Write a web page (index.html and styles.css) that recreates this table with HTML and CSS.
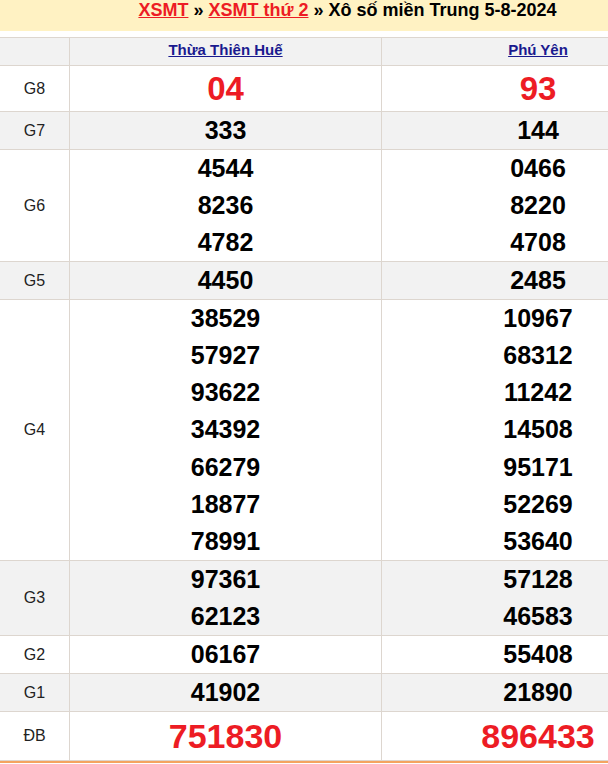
FILE: index.html
```html
<!DOCTYPE html>
<html lang="vi">
<head>
<meta charset="utf-8">
<title>XSMT thứ 2 - Xổ số miền Trung 5-8-2024</title>
<link rel="stylesheet" href="styles.css">
</head>
<body>
<div class="page">
  <h2 class="title"><a href="#">XSMT</a> » <a href="#">XSMT thứ 2</a> » Xô số miền Trung 5-8-2024</h2>
  <div class="board">
    <div class="row row-head gray">
      <div class="cell label"></div>
      <div class="cell prov"><a href="#">Thừa Thiên Huế</a></div>
      <div class="cell prov"><a href="#">Phú Yên</a></div>
    </div>
    <div class="row">
      <div class="cell label">G8</div>
      <div class="cell nums big"><div>04</div></div>
      <div class="cell nums big"><div>93</div></div>
    </div>
    <div class="row gray">
      <div class="cell label">G7</div>
      <div class="cell nums"><div>333</div></div>
      <div class="cell nums"><div>144</div></div>
    </div>
    <div class="row">
      <div class="cell label">G6</div>
      <div class="cell nums"><div>4544</div><div>8236</div><div>4782</div></div>
      <div class="cell nums"><div>0466</div><div>8220</div><div>4708</div></div>
    </div>
    <div class="row gray">
      <div class="cell label">G5</div>
      <div class="cell nums"><div>4450</div></div>
      <div class="cell nums"><div>2485</div></div>
    </div>
    <div class="row row-long">
      <div class="cell label">G4</div>
      <div class="cell nums"><div>38529</div><div>57927</div><div>93622</div><div>34392</div><div>66279</div><div>18877</div><div>78991</div></div>
      <div class="cell nums"><div>10967</div><div>68312</div><div>11242</div><div>14508</div><div>95171</div><div>52269</div><div>53640</div></div>
    </div>
    <div class="row gray">
      <div class="cell label">G3</div>
      <div class="cell nums"><div>97361</div><div>62123</div></div>
      <div class="cell nums"><div>57128</div><div>46583</div></div>
    </div>
    <div class="row">
      <div class="cell label">G2</div>
      <div class="cell nums"><div>06167</div></div>
      <div class="cell nums"><div>55408</div></div>
    </div>
    <div class="row gray">
      <div class="cell label">G1</div>
      <div class="cell nums"><div>41902</div></div>
      <div class="cell nums"><div>21890</div></div>
    </div>
    <div class="row row-last">
      <div class="cell label">ĐB</div>
      <div class="cell nums special"><div>751830</div></div>
      <div class="cell nums special"><div>896433</div></div>
    </div>
  </div>
</div>
</body>
</html>
```

FILE: styles.css
```css
html, body {
  margin: 0;
  padding: 0;
  background: #fff;
  overflow-x: hidden;
}

body {
  font-family: "Liberation Sans", Arial, sans-serif;
  color: #000;
}

.page {
  width: 695px;
}

.title {
  margin: 0;
  height: 31px;
  box-sizing: border-box;
  background: #fff2c3;
  font-size: 18px;
  line-height: 20px;
  font-weight: bold;
  text-align: center;
  color: #000;
}

.title a {
  color: #ed1c24;
  text-decoration: underline;
}

.board {
  margin-top: 6px;
  border-top: 1px solid #ddd6cf;
  border-bottom: 2px solid #f4a460;
}

.row {
  display: grid;
  grid-template-columns: 70px 312px 313px;
  border-bottom: 1px solid #ddd6cf;
  background: #fff;
}

.row.gray {
  background: #f2f2f2;
}

.cell {
  border-right: 1px solid #ddd6cf;
}

.label {
  display: flex;
  align-items: center;
  justify-content: center;
  font-size: 16px;
  color: #222;
}

.row-head .cell {
  height: 27px;
  box-sizing: border-box;
  padding-top: 3px;
}

.prov {
  text-align: center;
  font-size: 15px;
  line-height: 17px;
  font-weight: bold;
}

.prov a {
  color: #1a1a8f;
  text-decoration: underline;
}

.nums {
  text-align: center;
  font-weight: bold;
  font-size: 25px;
  line-height: 37px;
  color: #000;
}

.row-long .nums {
  line-height: 37.15px;
}

.nums.big {
  font-size: 33px;
  line-height: 45px;
  color: #ed1c24;
}

.nums.special {
  font-size: 34px;
  line-height: 48px;
  color: #ed1c24;
}
```
